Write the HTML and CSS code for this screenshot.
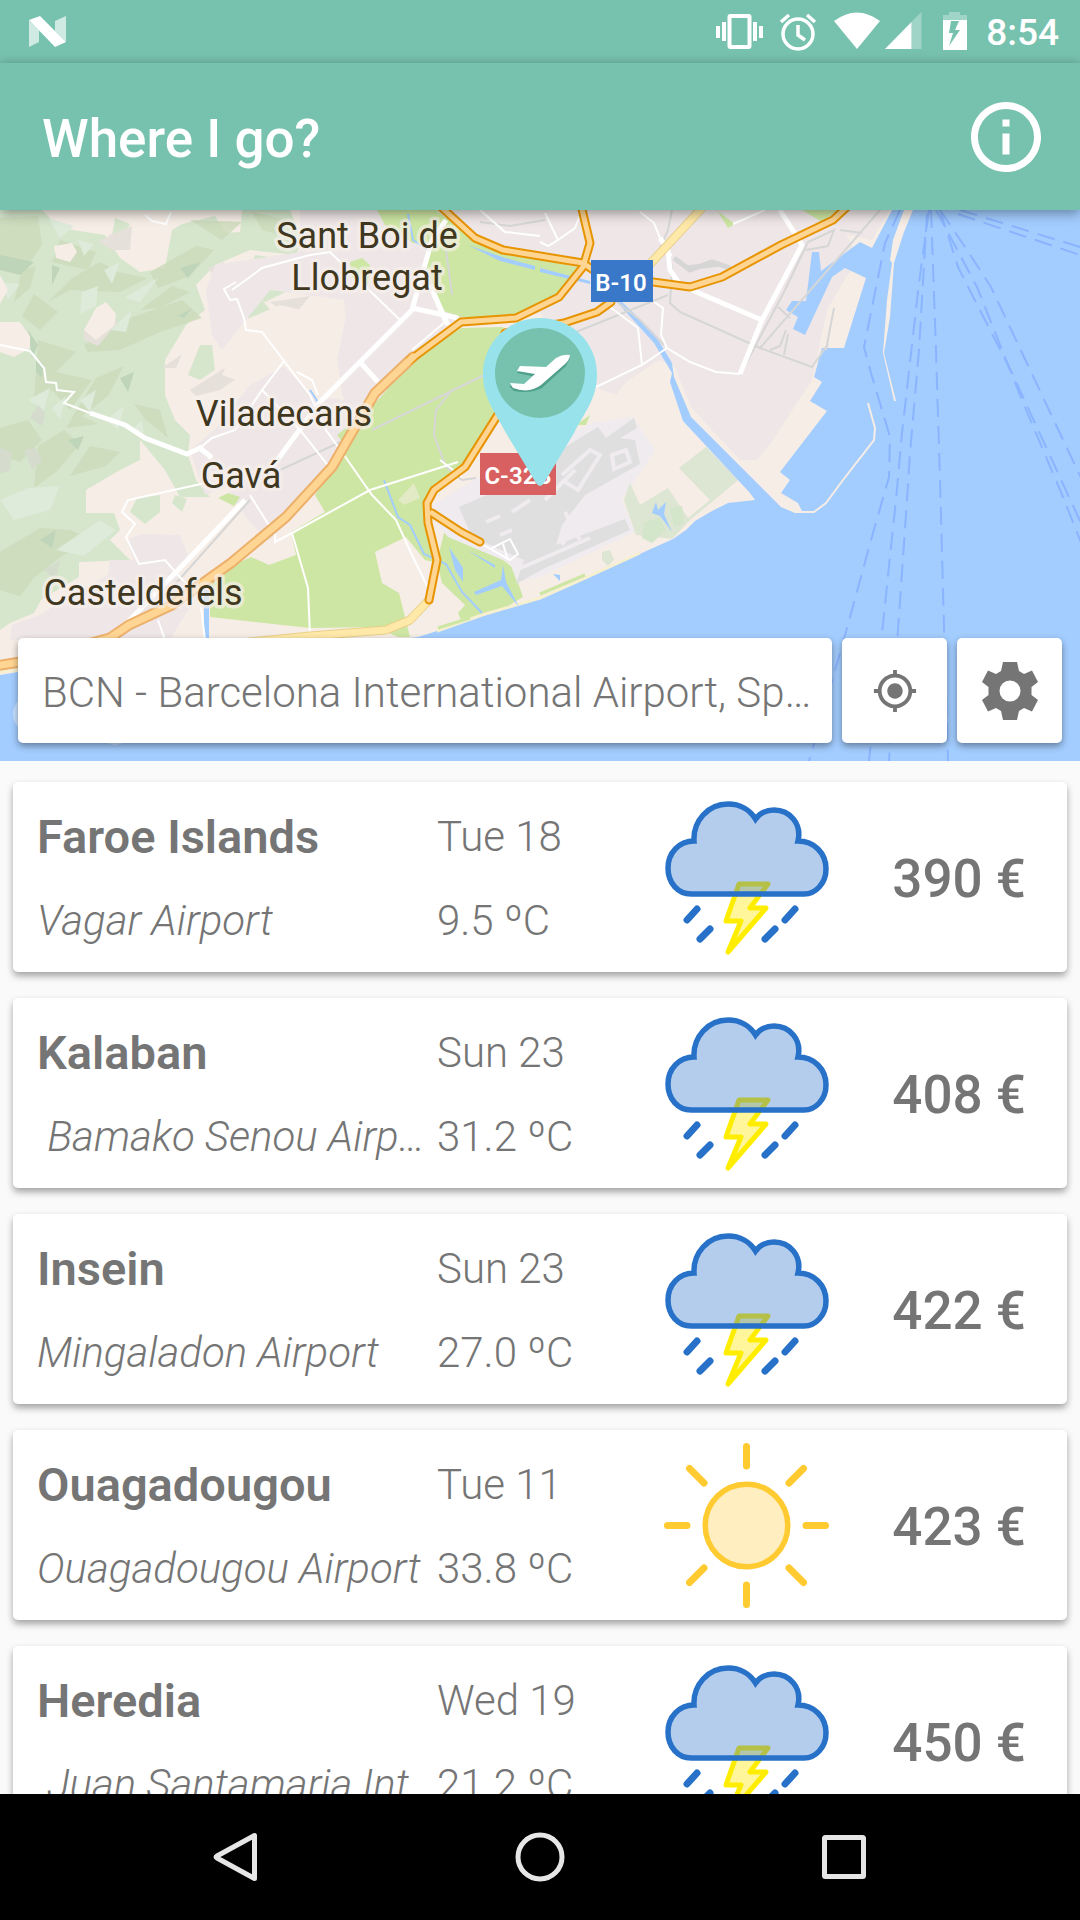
FILE: index.html
```html
<!DOCTYPE html>
<html lang="en">
<head>
    <meta charset="UTF-8">
    <meta name="viewport" content="width=device-width, initial-scale=1.0">
    <title>Where I go?</title>
    <link rel="stylesheet" href="styles.css">
</head>
<body>
    <!-- Shared weather icons -->
    <svg class="sprites" width="0" height="0" aria-hidden="true">
        <symbol id="storm" viewBox="0 2 170 170">
            <path d="M78 92H107L89 116H105L67 160L80 129H65Z" fill="#fff69b" stroke="#ffed00" stroke-width="5" stroke-linejoin="round"/>
            <path d="M30 102C17 102 7 91 7 76C7 61 18 49 33 49C32 29 47 12 67 12C79 12 89 18 94.500 27C99 21 106 18 113 18C129 18 141 32 137 49C153 49 165 61 165 77C165 91 155 102 143 102Z" fill="#2871c8" fill-opacity=".35" stroke="#2871c8" stroke-width="5.500"/>
            <path d="M36 117L26 128M49 137L39 147M134 117L124 128M114 137L104 147" stroke="#2871c8" stroke-width="7" stroke-linecap="round"/>
        </symbol>
        <symbol id="sun" viewBox="0 2 170 170">
            <circle cx="85.500" cy="85.500" r="41.300" fill="#ffeebf" stroke="#ffcb31" stroke-width="5.500"/>
            <path d="M85.500 6.500V26M85.500 145V164.500M6.500 85.500H26M145 85.500H164.500M28.500 28.500L43 43M128 128L142.500 142.500M142.500 28.500L128 43M43 128L28.500 142.500" stroke="#ffcb31" stroke-width="7" stroke-linecap="round"/>
        </symbol>
    </svg>

    <div class="status-bar">
        <svg width="40" height="32" viewBox="28 16 40 32">
            <path d="M29 20L39 30V42L29 47ZM55 21L66 16V42L55 31Z" fill="#fff" fill-opacity=".65"/>
            <path d="M29 20L40 16L66 42L55 47Z" fill="#fff"/>
        </svg>
        <div class="status-icons">
            <svg width="252" height="40" viewBox="715 12 252 40" fill="#fff">
                <path d="M716 26h4v12h-4zM722 22h4v19h-4zM753 22h4v19h-4zM759 26h4v12h-4z"/>
                <rect x="729.500" y="16" width="20" height="31" rx="1" fill="none" stroke="#fff" stroke-width="4"/>
                <circle cx="798" cy="34" r="15" fill="none" stroke="#fff" stroke-width="3.500"/>
                <path d="M798 25V35L805 40M781 22L789 15M815 22L807 15" fill="none" stroke="#fff" stroke-width="3.500"/>
                <path d="M857 49L834 21Q857 4 880 21Z"/>
                <path d="M885 49L911.500 22V49Z"/>
                <path d="M911.500 22L921.500 12V49H911.500Z" fill-opacity=".3"/>
                <path d="M943 15H949V12H960V15H967V20H943Z" fill-opacity=".3"/>
                <path fill-rule="evenodd" d="M943 20H967V50H943ZM951 21L949 33H953L949 46L960 30H955L959 21Z"/>
            </svg>
            <time class="clock">8:54</time>
        </div>
    </div>

    <header class="app-bar">
        <h1>Where I go?</h1>
        <button class="icon-button" aria-label="About">
            <svg width="84" height="84" viewBox="0 0 24 24" fill="#fff"><path d="M11 17h2v-6h-2v6zm1-15C6.480 2 2 6.480 2 12s4.480 10 10 10 10-4.480 10-10S17.520 2 12 2zm0 18c-4.410 0-8-3.590-8-8s3.590-8 8-8 8 3.590 8 8-3.590 8-8 8zM11 9h2V7h-2v2z"/></svg>
        </button>
    </header>

    <section class="map-area">
        <svg class="map" viewBox="0 210 1080 551" preserveAspectRatio="xMidYMid slice">
            <rect y="210" width="1080" height="551" fill="#f6ede6"/>

            <!-- Hills -->
            <path fill="#d6e6cd" d="M0 210H42L60 228L105 235L120 258L140 272L165 268L172 230L182 224L215 216L225 233L240 232L242 210H290L302 240L296 255L250 250L215 265L196 285L205 310L186 325L165 360L165 395L175 420L190 435L188 455L196 480L210 497H180L165 470L140 440V460L120 470L86 490V513L114 513L120 530L110 540L130 560L79 562V577L41 600L34 613L10 623L0 630Z"/>
            <path fill="#d6e6cd" d="M255 255L290 260V290L265 302L242 288ZM115 218L130 224L122 240L112 236ZM200 345H212L215 370L200 380L188 375ZM250 302L262 300L272 312L262 325L248 318ZM137 498L160 495V512L145 524L130 512ZM175 495L187 499L182 512L172 503Z"/>
            <g fill="#cddabb" fill-opacity=".85">
                <path d="M0 218L38 216L42 245L30 262L0 265ZM60 240L96 252L88 270L52 262ZM100 262L118 272L148 278L120 292L70 290L48 302L72 278ZM150 272L196 246L214 250L190 276L158 288Z"/>
                <path d="M34 294L58 312L40 330L22 316ZM84 345L130 318L182 300L202 318L160 332L120 350L88 352ZM38 340L76 352L56 372L92 380L70 410L52 390L34 400ZM96 378L124 366L108 396L82 416L98 424L66 428Z"/>
                <path d="M0 428L28 420L42 440L20 462L0 456ZM38 446L64 430L80 444L56 472L34 488ZM90 446L120 452L106 466L70 476ZM134 404L160 410L168 438L146 420ZM190 220L242 222L222 240ZM252 212L288 220L284 236L262 230ZM0 552L40 528L70 530L94 540L62 556L34 578L20 596L0 590Z"/>
                <path d="M140 310L172 286L190 292L160 308ZM22 270L36 266L30 288L14 302Z"/>
            </g>
            <g fill="#bfd5b9">
                <path d="M0 255L34 262L20 275L0 270ZM52 265L60 268L52 285ZM28 330L38 345L32 358ZM36 358L44 364L42 378L36 372ZM180 268L200 262L188 278ZM178 316L192 308L184 318ZM68 440L84 436L78 450ZM120 378L134 372L128 392ZM40 540L56 530L52 548Z"/>
            </g>
            <g fill="#deeada">
                <path d="M48 218L74 226L60 238ZM78 240L94 244L84 256ZM0 282L20 284L8 300ZM82 292L98 286L96 306L80 314ZM104 270L120 262L112 284ZM124 298L158 278L140 302ZM110 330L132 310L126 332ZM28 400L50 388L44 410ZM80 400L96 390L90 412ZM106 420L124 406L118 430ZM52 408L66 396L60 420ZM132 430L142 420L144 436ZM0 500L28 488L60 486L50 510L14 520ZM56 550L100 520L116 530L84 556Z"/>
            </g>
            <g fill="#e5e0da">
                <path d="M112 234L132 226L130 250L112 250L98 242ZM84 330L112 318L118 322L98 346L84 340ZM212 330L240 314L242 322L230 338L212 334ZM162 368L182 354L176 368ZM190 390L228 366L258 350L270 356L252 368L220 390L196 396ZM270 302L310 296L292 318ZM208 268L224 262L218 282Z"/>
            </g>
            <g fill="#f6ede6">
                <path d="M0 275L8 290L0 304ZM0 322L20 322L30 336V348L14 357L0 352ZM54 246L72 243L77 252L70 262L56 258ZM96 308L106 302L116 314L114 326L96 340L84 330Z"/>
            </g>
            <path fill="#d5dcce" d="M30 418L38 405L45 413L42 426ZM24 450L36 448L42 460L32 470ZM0 448L12 452L10 470L0 474ZM44 570L60 560L56 580Z"/>

            <!-- Built-up land -->
            <g fill="#eee6e7">
                <path d="M300 210H545L600 262L588 300L520 318L455 320L440 345L390 400L350 430L330 460L300 500L268 540L248 520L206 455L218 425L250 385L284 366L318 402L342 395L335 345L346 320L344 300L270 290L222 350L212 335L206 290L215 265L300 252Z"/>
                <path d="M545 210H890L872 240L846 234L860 262L848 274L827 310L812 380L771 443L757 460H740L712 430L691 407L674 365L659 360L626 382L616 395L595 387L560 345L540 312L590 290Z"/>
                <path d="M127 540L141 534L180 535L190 560L175 575L200 590L170 640H110L10 640L12 625L40 615L80 590L108 575L110 560L134 560ZM260 510L286 488L310 495L270 540Z"/>
                <path d="M214 430L248 410L290 450L260 475L205 495L190 450Z"/>
            </g>
            <path fill="#f6ede6" d="M245 320L280 305L345 320L335 370L344 400L310 395L284 366L250 385L222 375ZM440 480L500 415L535 470L470 490ZM620 395L660 360L680 420L660 450L620 420Z"/>

            <!-- Fields -->
            <g fill="#cde6a3">
                <path d="M377 210H436L475 240L503 252L581 268L557 298L516 317H461L441 310L432 287L426 265L430 243H413L386 227Z"/>
                <path d="M461 328L503 327L520 380L496 413L461 467L427 493L428 525L437 563L425 560L406 537L375 552L382 583L399 593L410 637H398L375 627L310 628L255 622L210 617V580L227 568L251 557L269 565L296 555L291 532L325 512L315 495L344 453L372 407L413 360Z"/>
                <path d="M444 533L482 543L513 568L523 597L496 613L461 620L458 613L465 605L442 583L437 562Z"/>
                <path d="M716 210L735 224L728 228L717 210ZM802 210H838L822 222ZM576 425L590 415L586 425ZM350 262L362 258L370 265L368 285L352 278ZM228 493L240 497L234 506L218 498ZM337 435L350 425L344 444Z"/>
            </g>
            <path fill="#f6ede6" d="M398 500L414 483L420 498L404 505Z" opacity=".5"/>

            <!-- Airport -->
            <path fill="#efebef" d="M430 507L470 482L540 450L592 423L633 417L655 450L622 500L635 532L540 577L517 582L510 563L448 537L434 520Z"/>
            <path fill="#dfdfdf" d="M459 507L540 472L552 455L598 427L606 438L634 418L637 428L620 438L635 440L640 464L585 495L562 525L556 545L625 519L630 530L545 568L516 584L524 560L472 537Z"/>
            <path fill="none" stroke="#efebef" stroke-width="4" d="M562 475L590 450L600 455L578 490L562 480M612 455L626 450L630 462L614 469ZM486 522L500 516M512 512L530 500M565 512L580 540M590 500L562 545M500 535L512 530M545 500L575 470M516 570L590 538"/>
            <path fill="none" stroke="#fff" stroke-width="2" d="M480 543L510 560L518 554L510 539L490 549M503 544L508 560"/>

            <!-- Delta reserves -->
            <g fill="#dde5d3">
                <path d="M679 468L706 447L738 480L712 502L690 520L672 539L636 535L624 500L630 483L640 505L668 488L688 518L710 500Z"/>
                <path d="M602 552L610 550L614 560L608 566L602 560Z"/>
            </g>
            <path fill="#d4e6ca" d="M644 522L660 518L666 530L652 543L642 538ZM670 508L682 506L684 524L674 527Z"/>

            <!-- Sea, harbour and river -->
            <path fill="#a3cdff" d="M0 675L18 672L220 660L418 637L437 631L482 615L540 598L581 580L633 557L673 539L686 530L695 521L712 511L728 503L755 500L750 493L683 421L670 382L672 373L654 343L617 302L591 283V278L623 303L654 333L672 363L674 377L691 417L781 507L795 513H803L798 503L781 493L790 480L780 472L827 411L810 401L822 382L814 377L822 348H844L866 278L845 268L832 277L805 335L793 329L798 317L786 310L792 301H806L812 252H819L821 271L860 242L872 248L892 210H1080V761H0Z"/>
            <path fill="#f6ede6" d="M904 210H913L904 232L894 263L890 317L884 353L896 401H894L883 353L887 300L892 263L890 260L893 240Z"/>
            <path fill="none" stroke="#f6ede6" stroke-width="2" d="M868 403L875 428L874 440L843 480L826 503L814 512L795 512"/>
            <path fill="none" stroke="#f6efd0" stroke-width="3" d="M437 631L482 615L540 598L581 580L640 553M0 672L20 670"/>
            <path fill="none" stroke="#cde6a3" stroke-width="3" d="M540 594L585 575M438 628L470 618"/>
            <path fill="#a3cdff" d="M449 547L463 568V582L455 570ZM467 550L495 565V568ZM503 565L506 582L519 607L502 586L476 595L474 592L501 580ZM652 513L656 502L658 510L666 502L664 514L672 532L660 516ZM204 590H209V640H204ZM553 574L560 575V581ZM468 245L505 258L535 266V270L500 261ZM540 268L590 281V284L540 272Z"/>
            <path fill="none" stroke="#a3cdff" stroke-width="2" d="M408 214L413 240L428 250M384 480L398 517L410 525L424 554L446 564L462 592L482 613M310 390L322 408"/>

            <!-- Ferry lines -->
            <g fill="none" stroke="#8ab4ff" stroke-width="2" stroke-dasharray="18 9">
                <path d="M900 210L885 243L864 347L871 373L890 437L889 477L871 540L852 610L840 653L809 761"/>
                <path d="M929 210L919 283L902 433L896 500L891 547L882 633L869 761"/>
                <path d="M927 214L919 350L910 453L907 500L898 630L889 761"/>
                <path d="M931 210L936 350L940 480L944 627L948 761"/>
                <path d="M936 210L977 287L1022 400L1063 497L1082 545"/>
                <path d="M940 210L958 267L1012 373L1069 497L1082 525"/>
                <path d="M940 210L967 250L991 287L1082 480"/>
                <path d="M960 210L1080 247M958 214L1080 255"/>
            </g>

            <!-- Railways and minor roads -->
            <g fill="none" stroke="#d6d6d6" stroke-width="2">
                <path d="M668 240L672 270L670 303L680 312L760 348L812 367L828 344M760 348L880 210M840 230L862 233M806 250L828 246L834 230L808 242L784 292L740 375M778 307L790 318M786 330L780 346L770 350M788 334L784 355M834 308L826 350M576 332L668 295M372 430L484 375M452 390L436 410L434 435L446 467L462 480L476 478M446 250L452 295M280 470L345 440M480 222L510 226L545 220M592 282L640 320L664 345M654 262L668 230L672 210"/>
                <path stroke-width="5" d="M674 258L690 270L712 262L730 268M686 268L720 264"/>
                <path d="M250 500L170 590L140 620"/>
            </g>
            <g fill="none" stroke="#fff" stroke-width="2">
                <path d="M0 345L30 351L44 368L46 382L56 383L57 390L74 392L64 403L90 413M145 215L152 221L166 224L171 212M236 282L224 289L230 300L237 299L244 318L246 330L262 332L284 361L310 395L326 430L344 455L372 495L396 520L412 555L429 590"/>
                <path d="M232 290L262 268L310 255L330 252L400 320M284 361L262 390L235 430L212 438L200 448M262 390L300 430L330 468M210 482L128 500L122 512L135 524L126 537L139 564L165 560L178 575L200 598L205 640M158 620L165 640M250 495L275 535L275 542L292 533L370 490L458 462M292 533L308 588L310 636M297 372L312 380L318 395M412 350L445 322M440 460L462 477"/>
                <path d="M640 212L654 223L662 243L672 256M545 213L558 240L548 246L540 242M558 240L575 228L582 210M606 304L638 328L642 365L596 387M654 302L663 308L661 335L667 348L642 365M667 348L690 362L716 372L740 374M733 224L765 210M480 210L505 232L540 236"/>
            </g>
            <g fill="none" stroke="#fff" stroke-width="5">
                <path d="M90 413L125 425L145 438L187 454L200 448L212 458M245 500L178 570L125 625M270 470L320 402L360 362L412 310L432 240L446 220M412 308L458 318M430 285L448 325M360 362L378 382M780 210L802 245L762 320L740 374M762 320L680 285L670 270L668 250L660 238"/>
                <path d="M430 285L446 322"/>
            </g>

            <!-- Highways -->
            <g fill="none" stroke-linejoin="round" stroke-linecap="round">
                <path stroke="#e8d08c" stroke-width="9" d="M429 600L410 620L386 630L310 636L250 642M702 208L650 264"/>
                <path stroke="#ffe9a8" stroke-width="7" d="M429 600L410 620L386 630L310 636L250 642M702 208L650 264"/>
                <path stroke="#ecb06a" stroke-width="11" d="M-5 666L20 662L110 638L129 625L172 605L231 563L286 517L332 467L355 427L375 393L413 357"/>
                <g stroke="#e79400" stroke-width="9">
                    <path d="M410 360L461 322L516 318L559 297L583 267L590 243L581 205"/>
                    <path d="M440 206L475 238L503 250L540 256L583 263L605 278L653 282L690 287L722 277L781 245L833 220L848 206"/>
                    <path d="M611 302L597 312L564 323L505 333L530 370L499 413L465 467L434 490L427 503L428 523L437 560L429 600"/>
                    <path d="M432 513L461 532L480 542"/>
                </g>
                <g stroke="#ffd593" stroke-width="5">
                    <path stroke-width="7" d="M-5 666L20 662L110 638L129 625L172 605L231 563L286 517L332 467L355 427L375 393L413 357"/>
                    <path d="M410 360L461 322L516 318L559 297L583 267L590 243L581 205"/>
                    <path d="M440 206L475 238L503 250L540 256L583 263L605 278L653 282L690 287L722 277L781 245L833 220L848 206"/>
                    <path d="M611 302L597 312L564 323L505 333L530 370L499 413L465 467L434 490L427 503L428 523L437 560L429 600"/>
                    <path d="M432 513L461 532L480 542"/>
                </g>
            </g>
            <circle cx="32" cy="714" r="19" fill="#c8e1ff"/>
            <circle cx="115" cy="730" r="15" fill="#c8e1ff"/>

            <!-- Place names -->
            <g class="place">
                <text x="367" y="248">Sant Boi de</text>
                <text x="367" y="290">Llobregat</text>
                <text x="284" y="426">Viladecans</text>
                <text x="241" y="488">Gavá</text>
                <text x="143" y="605">Casteldefels</text>
            </g>

            <!-- Road shields -->
            <rect x="591" y="260" width="62" height="42" fill="#3977c8"/>
            <rect x="480" y="453" width="76" height="42" fill="#d96060"/>
            <g class="shield">
                <text x="621" y="291">B-10</text>
                <text x="518" y="484">C-32B</text>
            </g>

            <!-- Airport pin -->
            <path fill="#98e3eb" d="M540 318C508 318 483 343 483 374C483 398 494 410 506 433L536 483Q540 489 544 483L574 433C586 410 597 398 597 374C597 343 572 318 540 318Z"/>
            <circle cx="540" cy="373" r="45" fill="#77c2ae"/>
            <path fill="#4fa08b" d="M509 386L525 387L536 377L517 373L520 369L547 369L556 360Q563 355 570 358L566 366L542 388Q530 394 514 391Z"/>
            <path fill="#fff" d="M510 383L524 384L535 374L517 371L520 366L546 367L556 358Q563 354 570 355Q569 361 565 364L541 385Q529 394 513 388Z"/>
        </svg>

        <form class="search">
            <input class="search-box" type="text" aria-label="Departure airport" value="BCN - Barcelona International Airport, Spain">
            <button class="square-button" type="button" aria-label="Use my location">
                <svg width="46" height="46" viewBox="0 0 24 24" fill="#757575"><path d="M12 8c-2.210 0-4 1.790-4 4s1.790 4 4 4 4-1.790 4-4-1.790-4-4-4zm8.940 3c-.460-4.170-3.770-7.480-7.940-7.940V1h-2v2.060C6.830 3.520 3.520 6.830 3.060 11H1v2h2.060c.460 4.170 3.770 7.480 7.940 7.940V23h2v-2.060c4.170-.460 7.480-3.770 7.940-7.940H23v-2h-2.060zM12 19c-3.870 0-7-3.130-7-7s3.130-7 7-7 7 3.130 7 7-3.130 7-7 7z"/></svg>
            </button>
            <button class="square-button" type="button" aria-label="Settings">
                <svg width="60" height="60" viewBox="-30 -30 60 60" fill="#757575"><path fill-rule="evenodd" d="M-7 -29H7L9 -20L14 -17L22 -20.500L28 -9L21.500 -4V4L28 9L22 20.500L14 17L9 20L7 29H-7L-9 20L-14 17L-22 20.500L-28 9L-21.500 4V-4L-28 -9L-22 -20.500L-14 -17L-9 -20ZM0 -10.500A10.500 10.500 0 1 0 0 10.500A10.500 10.500 0 1 0 0 -10.500Z"/></svg>
            </button>
        </form>
    </section>

    <ul class="flights">
        <li class="card">
            <div class="place-info">
                <h2>Faroe Islands</h2>
                <p class="airport">Vagar Airport</p>
            </div>
            <div class="forecast">
                <p>Tue 18</p>
                <p>9.5 ºC</p>
            </div>
            <svg class="weather" role="img" aria-label="Thunderstorm"><use href="#storm"/></svg>
            <p class="price">390 €</p>
        </li>
        <li class="card">
            <div class="place-info">
                <h2>Kalaban</h2>
                <p class="airport"> Bamako Senou Airport</p>
            </div>
            <div class="forecast">
                <p>Sun 23</p>
                <p>31.2 ºC</p>
            </div>
            <svg class="weather" role="img" aria-label="Thunderstorm"><use href="#storm"/></svg>
            <p class="price">408 €</p>
        </li>
        <li class="card">
            <div class="place-info">
                <h2>Insein</h2>
                <p class="airport">Mingaladon Airport</p>
            </div>
            <div class="forecast">
                <p>Sun 23</p>
                <p>27.0 ºC</p>
            </div>
            <svg class="weather" role="img" aria-label="Thunderstorm"><use href="#storm"/></svg>
            <p class="price">422 €</p>
        </li>
        <li class="card">
            <div class="place-info">
                <h2>Ouagadougou</h2>
                <p class="airport">Ouagadougou Airport</p>
            </div>
            <div class="forecast">
                <p>Tue 11</p>
                <p>33.8 ºC</p>
            </div>
            <svg class="weather" role="img" aria-label="Sunny"><use href="#sun"/></svg>
            <p class="price">423 €</p>
        </li>
        <li class="card">
            <div class="place-info">
                <h2>Heredia</h2>
                <p class="airport"> Juan Santamaria Int. Airport</p>
            </div>
            <div class="forecast">
                <p>Wed 19</p>
                <p>21.2 ºC</p>
            </div>
            <svg class="weather" role="img" aria-label="Thunderstorm"><use href="#storm"/></svg>
            <p class="price">450 €</p>
        </li>
    </ul>

    <nav class="nav-bar">
        <button aria-label="Back">
            <svg width="50" height="50" viewBox="0 0 50 50"><path d="M43.500 3.500V46.500L6 26Q4 25 6 24Z"/></svg>
        </button>
        <button aria-label="Home">
            <svg width="50" height="50" viewBox="0 0 50 50"><circle cx="25" cy="25" r="22"/></svg>
        </button>
        <button aria-label="Recent apps">
            <svg width="50" height="50" viewBox="0 0 50 50"><rect x="5.500" y="5.500" width="39" height="39" rx="1"/></svg>
        </button>
    </nav>
</body>
</html>
```
FILE: styles.css
```css
* {
    box-sizing: border-box;
}
body {
    margin: 0;
    height: 100vh;
    display: flex;
    flex-direction: column;
    overflow: hidden;
    background: #fafafa;
    color: #757575;
    font-family: Roboto, sans-serif;
}
h1, h2, p, ul {
    margin: 0;
    padding: 0;
}
button {
    display: flex;
    align-items: center;
    justify-content: center;
    padding: 0;
    border: none;
    background: none;
    cursor: pointer;
}
.sprites {
    position: absolute;
}

/* Top bars */
.status-bar {
    display: flex;
    align-items: center;
    justify-content: space-between;
    flex: none;
    height: 63px;
    padding: 0 21px 0 28px;
    background: #77c2ae;
    color: #fff;
}
.status-icons {
    display: flex;
    align-items: center;
    gap: 19px;
}
.clock {
    padding-top: 3px;
    font-size: 37px;
    font-weight: 500;
    line-height: 40px;
}
.app-bar {
    display: flex;
    align-items: center;
    justify-content: space-between;
    flex: none;
    position: relative;
    z-index: 1;
    height: 147px;
    padding: 0 32px 0 42px;
    background: #77c2ae;
    color: #fff;
    box-shadow: 0 3px 12px rgba(0, 0, 0, 0.4);
}
.app-bar h1 {
    padding-top: 4px;
    font-size: 53px;
    font-weight: 500;
}

/* Map */
.map-area {
    display: flex;
    align-items: flex-end;
    flex: none;
    position: relative;
    height: 551px;
    padding: 18px;
}
.map {
    position: absolute;
    top: 0;
    left: 0;
    width: 100%;
    height: 100%;
}
.place {
    fill: #40371f;
    stroke: #f6efea;
    stroke-opacity: 0.7;
    stroke-width: 7px;
    stroke-linejoin: round;
    paint-order: stroke;
    font-size: 36px;
    text-anchor: middle;
}
.shield {
    fill: #fff;
    font-size: 24px;
    font-weight: 600;
    text-anchor: middle;
}
.search {
    display: flex;
    flex: 1;
    gap: 10px;
    position: relative;
    height: 105px;
}
.search-box, .square-button {
    border-radius: 5px;
    background: #fff;
    box-shadow: 0 3px 7px rgba(0, 0, 0, 0.4);
}
.search-box {
    flex: 1;
    min-width: 0;
    padding: 4px 16px 0 24px;
    border: none;
    color: #757575;
    font-family: inherit;
    font-size: 42px;
    font-weight: 300;
    text-overflow: ellipsis;
}
.square-button {
    width: 105px;
}

/* Flight list */
.flights {
    display: flex;
    flex-direction: column;
    flex: 1;
    gap: 26px;
    min-height: 0;
    padding: 21px 13px 0;
    overflow: hidden;
    list-style: none;
}
.card {
    display: grid;
    grid-template-columns: 400fr 224fr 170px 195fr;
    align-items: center;
    flex: none;
    height: 190px;
    padding: 4px 41px 0 24px;
    border-radius: 5px;
    background: #fff;
    box-shadow: 0 4px 7px rgba(0, 0, 0, 0.35);
}
.place-info {
    min-width: 0;
}
.card h2, .card p {
    line-height: 84px;
    white-space: pre;
}
.card h2 {
    font-size: 47px;
    font-weight: 600;
}
.airport, .forecast {
    font-size: 42px;
    font-weight: 300;
}
.airport {
    overflow: hidden;
    text-overflow: ellipsis;
    font-style: italic;
}
.weather {
    width: 170px;
    height: 170px;
}
.price {
    font-size: 53px;
    font-weight: 500;
    text-align: right;
}

/* System navigation */
.nav-bar {
    display: flex;
    justify-content: center;
    flex: none;
    height: 126px;
    background: #000;
}
.nav-bar button {
    flex: 0 1 304px;
}
.nav-bar svg {
    fill: none;
    stroke: #e6e6e6;
    stroke-width: 5;
    stroke-linejoin: round;
}
```
